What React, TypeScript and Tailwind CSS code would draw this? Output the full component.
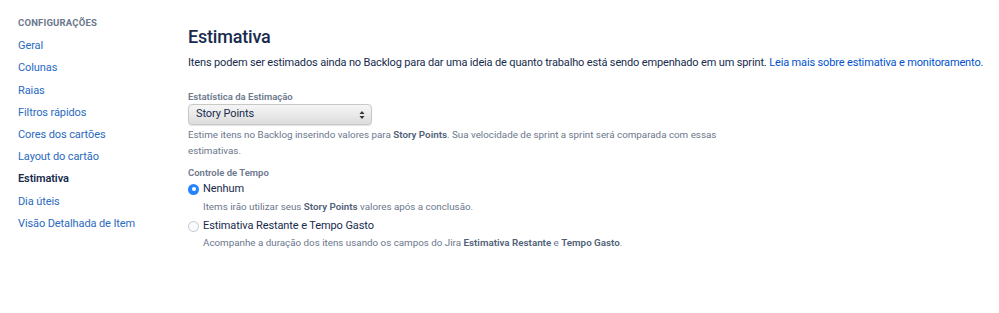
const navItems = [
  'Geral',
  'Colunas',
  'Raias',
  'Filtros rápidos',
  'Cores dos cartões',
  'Layout do cartão',
  'Estimativa',
  'Dia úteis',
  'Visão Detalhada de Item',
];

const Radio = ({ checked }: { checked?: boolean }) =>
  checked ? (
    <span className="flex h-[11px] w-[11px] shrink-0 items-center justify-center rounded-full bg-[#2684ff]">
      <span className="h-[4px] w-[4px] rounded-full bg-white" />
    </span>
  ) : (
    <span className="h-[11px] w-[11px] shrink-0 rounded-full border border-[#c1c7d0] bg-[#fafbfc]" />
  );

export default function App() {
  return (
    <div className="flex min-h-[313px] w-[999px] bg-white font-['Roboto',sans-serif] text-[#172b4d]">
      {/* Sidebar */}
      <aside className="w-[188px] shrink-0 pl-[18px] pt-[16px]">
        <div className="mb-[5px] text-[9.5px] font-bold tracking-[0.02em] text-[#6b778c]">CONFIGURAÇÕES</div>
        <ul className="flex flex-col">
          {navItems.map((item) => (
            <li
              key={item}
              className={`h-[22.2px] leading-[22px] text-[11px] tracking-[-0.1px] ${
                item === 'Estimativa' ? 'font-semibold text-[#172b4d]' : 'text-[#2a6ac0]'
              }`}
            >
              {item}
            </li>
          ))}
        </ul>
      </aside>

      {/* Main */}
      <main className="flex-1 pt-[25px]">
        <h1 className="text-[18px] leading-[24px] font-medium tracking-[-0.2px] text-[#172b4d]">Estimativa</h1>
        <p className="mt-[6px] text-[11px] leading-[16px] tracking-[-0.15px] text-[#172b4d]">
          Itens podem ser estimados ainda no Backlog para dar uma ideia de quanto trabalho está sendo empenhado em um
          sprint. <span className="text-[#0052cc]">Leia mais sobre estimativa e monitoramento.</span>
        </p>

        <div className="mt-[20px] text-[9.5px] leading-[12px] font-semibold text-[#6b778c]">Estatística da Estimação</div>
        <div className="mt-[1px] flex h-[21px] w-[184px] items-center justify-between rounded-[4px] border border-[#c8c8c8] bg-gradient-to-b from-[#f6f6f6] to-[#dcdcdc] pl-[7px] pr-[6px] shadow-[0_1px_1px_rgba(0,0,0,0.12)]">
          <span className="text-[11px] tracking-[-0.1px] text-[#172b4d]">Story Points</span>
          <svg width="6" height="10" viewBox="0 0 6 10">
            <path d="M0.5 4 L3 1 L5.5 4 Z" fill="#333" />
            <path d="M0.5 6 L3 9 L5.5 6 Z" fill="#333" />
          </svg>
        </div>
        <p className="mt-[2px] max-w-[532px] text-[9.8px] leading-[16px] text-[#6b778c]">
          Estime itens no Backlog inserindo valores para <b className="font-semibold text-[#505f79]">Story Points</b>.
          Sua velocidade de sprint a sprint será comparada com essas estimativas.
        </p>

        <div className="mt-[8px] text-[9.5px] leading-[12px] font-semibold text-[#6b778c]">Controle de Tempo</div>
        <div className="mt-[2px] flex items-center gap-[4px]">
          <Radio checked />
          <span className="text-[11px] leading-[16px] tracking-[-0.1px]">Nenhum</span>
        </div>
        <p className="mt-[3px] pl-[15px] text-[9.8px] leading-[14px] text-[#6b778c]">
          Items irão utilizar seus <b className="font-semibold text-[#505f79]">Story Points</b> valores após a conclusão.
        </p>
        <div className="mt-[4px] flex items-center gap-[4px]">
          <Radio />
          <span className="text-[11px] leading-[16px] tracking-[-0.1px]">Estimativa Restante e Tempo Gasto</span>
        </div>
        <p className="mt-[2px] pl-[15px] text-[9.8px] leading-[14px] text-[#6b778c]">
          Acompanhe a duração dos itens usando os campos do Jira{' '}
          <b className="font-semibold text-[#505f79]">Estimativa Restante</b> e{' '}
          <b className="font-semibold text-[#505f79]">Tempo Gasto</b>.
        </p>
      </main>
    </div>
  );
}
